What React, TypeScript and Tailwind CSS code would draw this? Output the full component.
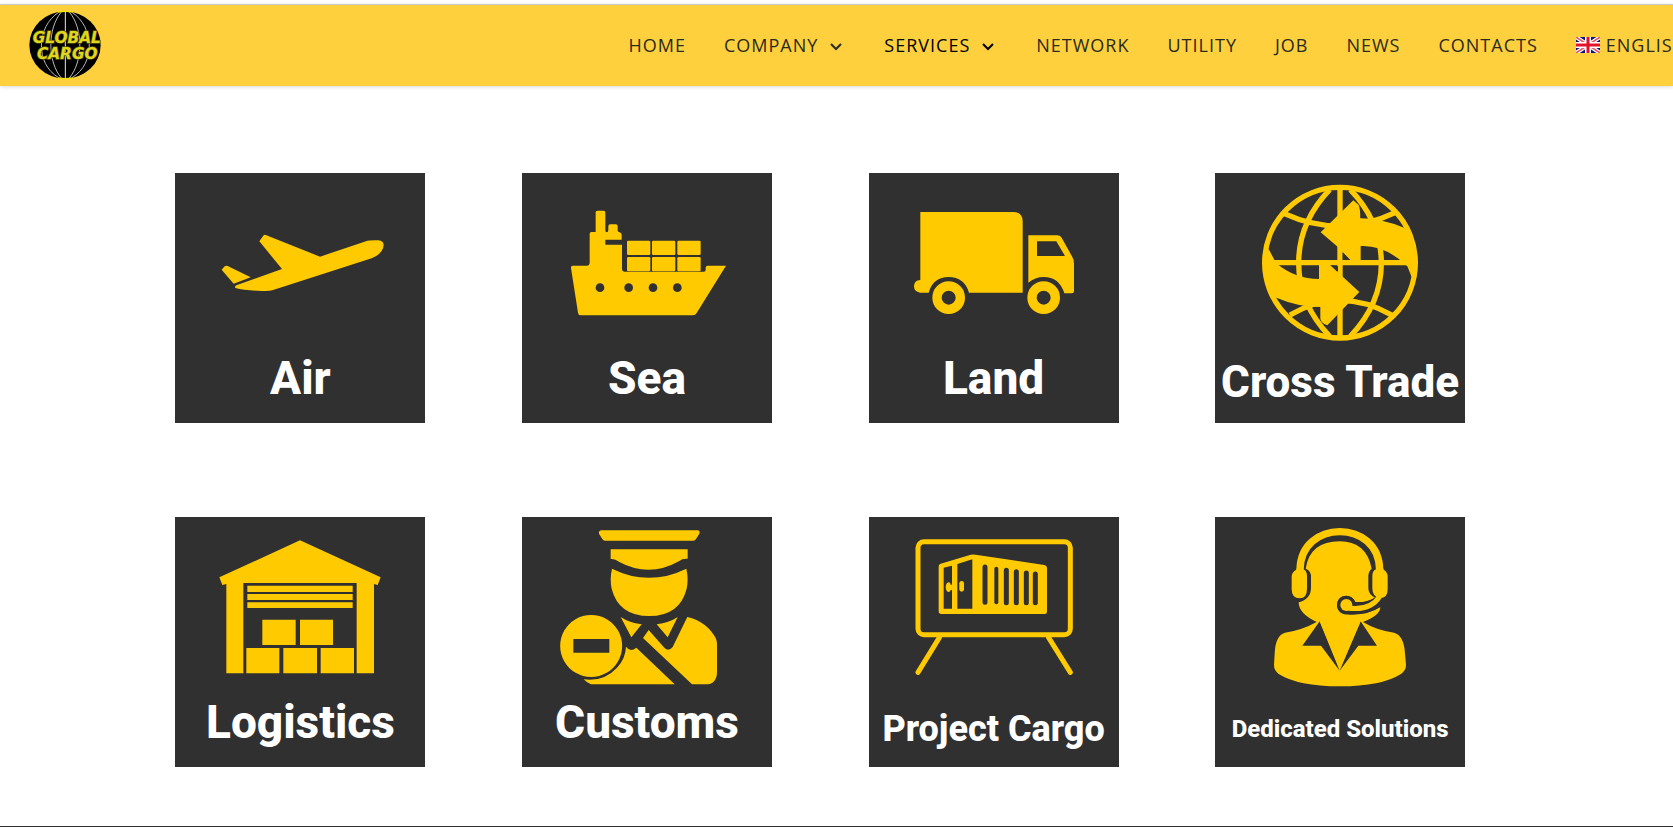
import type { ReactNode } from "react";
import { clsx } from "clsx";

interface NavItem {
  label: string;
  hasMenu?: boolean;
  active?: boolean;
  flag?: boolean;
}

const NAV_ITEMS: NavItem[] = [
  { label: "HOME" },
  { label: "COMPANY", hasMenu: true },
  { label: "SERVICES", hasMenu: true, active: true },
  { label: "NETWORK" },
  { label: "UTILITY" },
  { label: "JOB" },
  { label: "NEWS" },
  { label: "CONTACTS" },
  { label: "ENGLISH", flag: true },
];

function Logo() {
  return (
    <svg viewBox="87 36 216 202" className="h-[68px] w-[72px]" role="img" aria-label="Global Cargo">
      <ellipse cx="195" cy="137" rx="107" ry="101" fill="#000" />
      <g fill="none" stroke="#b9b9b9" strokeWidth="3">
        <path d="M196 38v198" stroke="#e5e5e5" />
        <path d="M184 38c-42 50-42 148 0 198M208 38c42 50 42 148 0 198" />
        <path d="M176 39c-66 42-72 154 0 196M216 39c66 42 72 154 0 196" />
      </g>
      <path d="M174 38q22-5 44 0M174 236q22 5 44 0" stroke="#f2e600" strokeWidth="5" fill="none" />
      <g
        fill="#e0d61c"
        stroke="#57520a"
        strokeWidth="4"
        paintOrder="stroke"
        fontFamily="'DejaVu Sans', sans-serif"
        fontWeight="700"
        fontStyle="italic"
        fontSize="46"
      >
        <text x="98" y="131">GLOBAL</text>
        <text x="111" y="180">CARGO</text>
      </g>
    </svg>
  );
}

function UkFlag() {
  return (
    <svg viewBox="0 0 24 16" className="h-4 w-6" aria-hidden="true">
      <path fill="#12127e" d="M0 0h24v16H0z" />
      <path d="M0 0l24 16M24 0L0 16" stroke="#fff" strokeWidth="4" />
      <path d="M0 0l24 16M24 0L0 16" stroke="#e8505a" strokeWidth="1.5" />
      <path d="M12 0v16M0 8h24" stroke="#fff" strokeWidth="6" />
      <path d="M12 0v16M0 8h24" stroke="#e3122a" strokeWidth="3" />
    </svg>
  );
}

function Chevron() {
  return (
    <svg viewBox="0 0 12 8" className="mt-1 mr-1 ml-3 h-2 w-3" fill="none" stroke="currentColor" strokeWidth="2" aria-hidden="true">
      <path d="M1 1l5 5 5-5" />
    </svg>
  );
}

const airIcon = (
  <>
    <path d="M283 235L296 217Q299 214 304 217L465 281L603 235Q613 231 640 232Q656 234 656 246Q655 266 632 280L620 286L322 382Q313 385 290 384Q240 382 211 375Q208 371 214 367L351 318Z" />
    <path d="M170 320L179 310Q183 307 188 309L257 343L206 362Z" />
  </>
);

const seaIcon = (
  <>
    <path d="M182 308H225Q233 307 233 299V212Q233 207 238 207H251V148Q251 143 256 143H275Q280 143 280 148V202Q280 208 285 208Q289 207 289 200V190Q289 184 295 184H311Q317 184 317 190V203Q318 207 323 208Q329 210 329 216V230H280V245H330V319Q330 326 337 326H576Q581 326 581 320V314Q581 308 587 308H642L554 450Q550 457 543 457H206Q199 457 198 449L177 315Q176 308 182 308Z" />
    <rect x="345" y="233" width="70" height="43" rx="4" />
    <rect x="420" y="233" width="70" height="43" rx="4" />
    <rect x="496" y="233" width="70" height="43" rx="4" />
    <rect x="345" y="282" width="70" height="43" rx="4" />
    <rect x="420" y="282" width="70" height="43" rx="4" />
    <rect x="496" y="282" width="70" height="43" rx="4" />
    <g fill="#303030">
      <circle cx="264" cy="374" r="13" />
      <circle cx="350" cy="374" r="13" />
      <circle cx="423" cy="374" r="13" />
      <circle cx="496" cy="374" r="13" />
    </g>
  </>
);

const landIcon = (
  <>
    <path d="M184 147H463Q491 147 491 175V389H330Q316 342 269 342Q222 342 209 389H183Q165 386 165 370Q165 352 184 351Z" />
    <path
      fillRule="evenodd"
      d="M508 217H595Q603 217 608 224L640 282Q645 290 645 302V385Q645 391 639 391H616Q601 342 554 342Q528 342 508 359ZM534 235V279H618L592 235Z"
    />
    <circle cx="269" cy="404" r="35" fill="none" stroke="#ffcb00" strokeWidth="28" />
    <circle cx="554" cy="404" r="35" fill="none" stroke="#ffcb00" strokeWidth="28" />
  </>
);

const crossTradeIcon = (
  <>
    <g fill="none" stroke="#ffcb00" strokeWidth="16">
      <circle cx="405" cy="299" r="226" />
      <path d="M405 75V525M190 299H615" />
      <path d="M374 80C250 210 250 390 374 520M436 80C560 210 560 390 436 520" />
      <path d="M238 152Q405 228 572 148M255 456Q405 368 560 456" />
    </g>
    <path d="M347 208L445 112L461 126Q466 137 466 165Q535 168 597 194L624 225L638 299L620 342L607 310Q540 245 467 249V293H438L396 250Z" />
    <path d="M463 387L367 487Q346 480 346 466V432Q280 432 214 404L190 380L172 299L191 258L213 300Q270 348 342 348V293L375 306Z" />
    <g fill="#303030">
      <path d="M468 136L486 165L467 166ZM327 434L344 432V460Z" />
      <path d="M378 307L399 310V326ZM413 269L434 291H413Z" />
    </g>
  </>
);

const logisticsIcon = (
  <>
    <path d="M405 100L647 211L638 234L627 231V499H575V228H235V499H184V231L172 234L163 211Z" />
    <path d="M247 236H563V255H247ZM247 261H563V279H247ZM247 286H563V303H247Z" />
    <path d="M292 338H392V414H292ZM405 338H504V414H405ZM244 423H343V499H244ZM355 423H456V499H355ZM467 423H567V499H467Z" />
  </>
);

const customsIcon = (
  <>
    <path d="M267 70H557Q565 71 562 80L552 96Q549 101 544 101H279Q274 101 271 96L261 80Q259 72 267 70Z" />
    <path d="M296 127H527V155Q510 154 502 162Q412 213 322 165Q308 154 296 156Z" />
    <path d="M300 185Q411 240 523 185Q530 215 524 245Q503 327 412 327Q320 327 299 245Q293 215 300 185Z" />
    <path d="M326 330Q351 347 389 352L358 391ZM497 330Q472 347 434 352L467 391Z" />
    <path d="M526 330Q585 344 612 395Q615 402 615 415V494Q615 532 580 532H540L393 393L410 369L455 420Q468 437 482 420Z" />
    <path d="M342 419Q355 437 373 422L488 532H237Q224 527 215 517Q275 525 315 482Q341 454 342 419Z" />
    <path fillRule="evenodd" d="M238 324A93 93 0 1 1 237 324ZM184 396V437H292V396Z" />
  </>
);

const projectIcon = (
  <>
    <g fill="none" stroke="#ffcb00" strokeWidth="15" strokeLinecap="round">
      <rect x="177" y="104" width="457" height="279" rx="18" />
      <path d="M241 392L177 496M569 392L634 496" />
    </g>
    <path
      fillRule="evenodd"
      d="M239 178Q239 172 245 170L335 143Q345 141 355 144L556 174Q564 176 564 183V314Q564 321 557 321H247Q239 321 239 313ZM254 182V305H279V176ZM295 171V305H340V157Z"
    />
    <path d="M268 226Q275 226 275 233H282V249H275Q275 255 268 255Q261 253 260 241Q261 228 268 226Z" />
    <rect x="301" y="222" width="14" height="32" rx="7" />
    <g stroke="#303030" strokeLinecap="round" strokeWidth="15">
      <path d="M378 180V286M442 190V287M472 194V287M502 198V287M529 201V287" />
      <path d="M412 185V286" strokeWidth="12" />
    </g>
  </>
);

const dedicatedIcon = (
  <>
    <path d="M335 345Q281 320 281 286Q318 276 318 242V205Q316 190 302 185Q315 103 404 103Q484 103 500 185Q490 193 490 207V244Q490 262 510 272Q484 287 451 285Q442 266 423 266Q396 268 396 295Q398 321 427 322Q485 326 526 300Q526 325 474 345Q515 370 567 377Q597 385 600 440L603 474Q603 490 588 501Q530 538 404 538Q280 538 221 501Q207 490 207 474L209 440Q211 385 240 377Q290 370 335 345Z" />
    {/* gap left around the microphone */}
    <path d="M451 288Q485 289 512 270L526 300Q485 326 427 322A28 28 0 1 1 451 288Z" fill="#303030" />
    <path fill="#303030" d="M344 343L404 491L467 343L516 416H460L404 491L348 416H292Z" />
    <path d="M344 343L404 486L467 343Z" />
    <path d="M285 190C285 35 524 35 524 190" fill="none" stroke="#ffcb00" strokeWidth="22" />
    <path d="M274 185Q286 182 298 188Q306 193 306 207V245Q306 274 284 274Q260 274 260 247V210Q260 195 274 188ZM536 185Q522 182 510 188Q502 193 502 207V244Q502 270 524 273Q548 274 548 247V210Q548 195 536 188Z" />
    <circle cx="424" cy="294" r="18" />
    <path d="M424 302Q495 314 524 268" fill="none" stroke="#ffcb00" strokeWidth="15" />
  </>
);

interface Service {
  name: string;
  icon: ReactNode;
  labelClass: string;
}

const BASE_LABEL = "text-[46px] leading-[70px]";

const SERVICES: Service[] = [
  { name: "Air", icon: airIcon, labelClass: BASE_LABEL },
  { name: "Sea", icon: seaIcon, labelClass: BASE_LABEL },
  { name: "Land", icon: landIcon, labelClass: BASE_LABEL },
  { name: "Cross Trade", icon: crossTradeIcon, labelClass: "text-[44px] leading-[78px]" },
  { name: "Logistics", icon: logisticsIcon, labelClass: BASE_LABEL },
  { name: "Customs", icon: customsIcon, labelClass: BASE_LABEL },
  { name: "Project Cargo", icon: projectIcon, labelClass: "text-[36px] leading-[84px]" },
  { name: "Dedicated Solutions", icon: dedicatedIcon, labelClass: "text-[24px] leading-[84px]" },
];

function ServiceTile({ name, icon, labelClass }: Service) {
  return (
    <a href="#" className="block h-[250px] w-[250px] overflow-hidden bg-[#303030] text-center">
      <svg viewBox="30 30 750 510" className="h-[170px] w-[250px]" fill="#ffcb00" aria-hidden="true">
        {icon}
      </svg>
      <span
        className={clsx(
          "block font-['Roboto',sans-serif] font-extrabold whitespace-nowrap text-white",
          labelClass
        )}
      >
        {name}
      </span>
    </a>
  );
}

export default function App() {
  return (
    <div className="overflow-x-hidden bg-white pt-1 font-['Open_Sans',sans-serif]">
      {/* Header */}
      <header className="flex h-[82px] items-center overflow-hidden border-t border-[#cccccc] bg-[#fed03d] pb-0.5 pl-[29px] shadow-[0_1px_4px_rgba(0,0,0,0.15)]">
        <a href="#" className="shrink-0">
          <Logo />
        </a>
        <nav className="-mr-[14px] ml-auto flex shrink-0 gap-[38px]">
          {NAV_ITEMS.map((item) => (
            <a
              key={item.label}
              href="#"
              className={clsx(
                "flex items-center text-[18px] leading-6 font-medium tracking-[1px] whitespace-nowrap",
                item.active ? "text-black" : "text-[#2a2a22]"
              )}
            >
              {item.flag && (
                <span className="mr-1.5">
                  <UkFlag />
                </span>
              )}
              {item.label}
              {item.hasMenu && <Chevron />}
            </a>
          ))}
        </nav>
      </header>

      {/* Services */}
      <main className="grid grid-cols-4 justify-items-center gap-y-[94px] pt-[87px] pr-[9.54%] pb-[59px] pl-[7.6%]">
        {SERVICES.map((service) => (
          <ServiceTile key={service.name} {...service} />
        ))}
      </main>

      <footer className="border-t border-[#303030]" />
    </div>
  );
}
